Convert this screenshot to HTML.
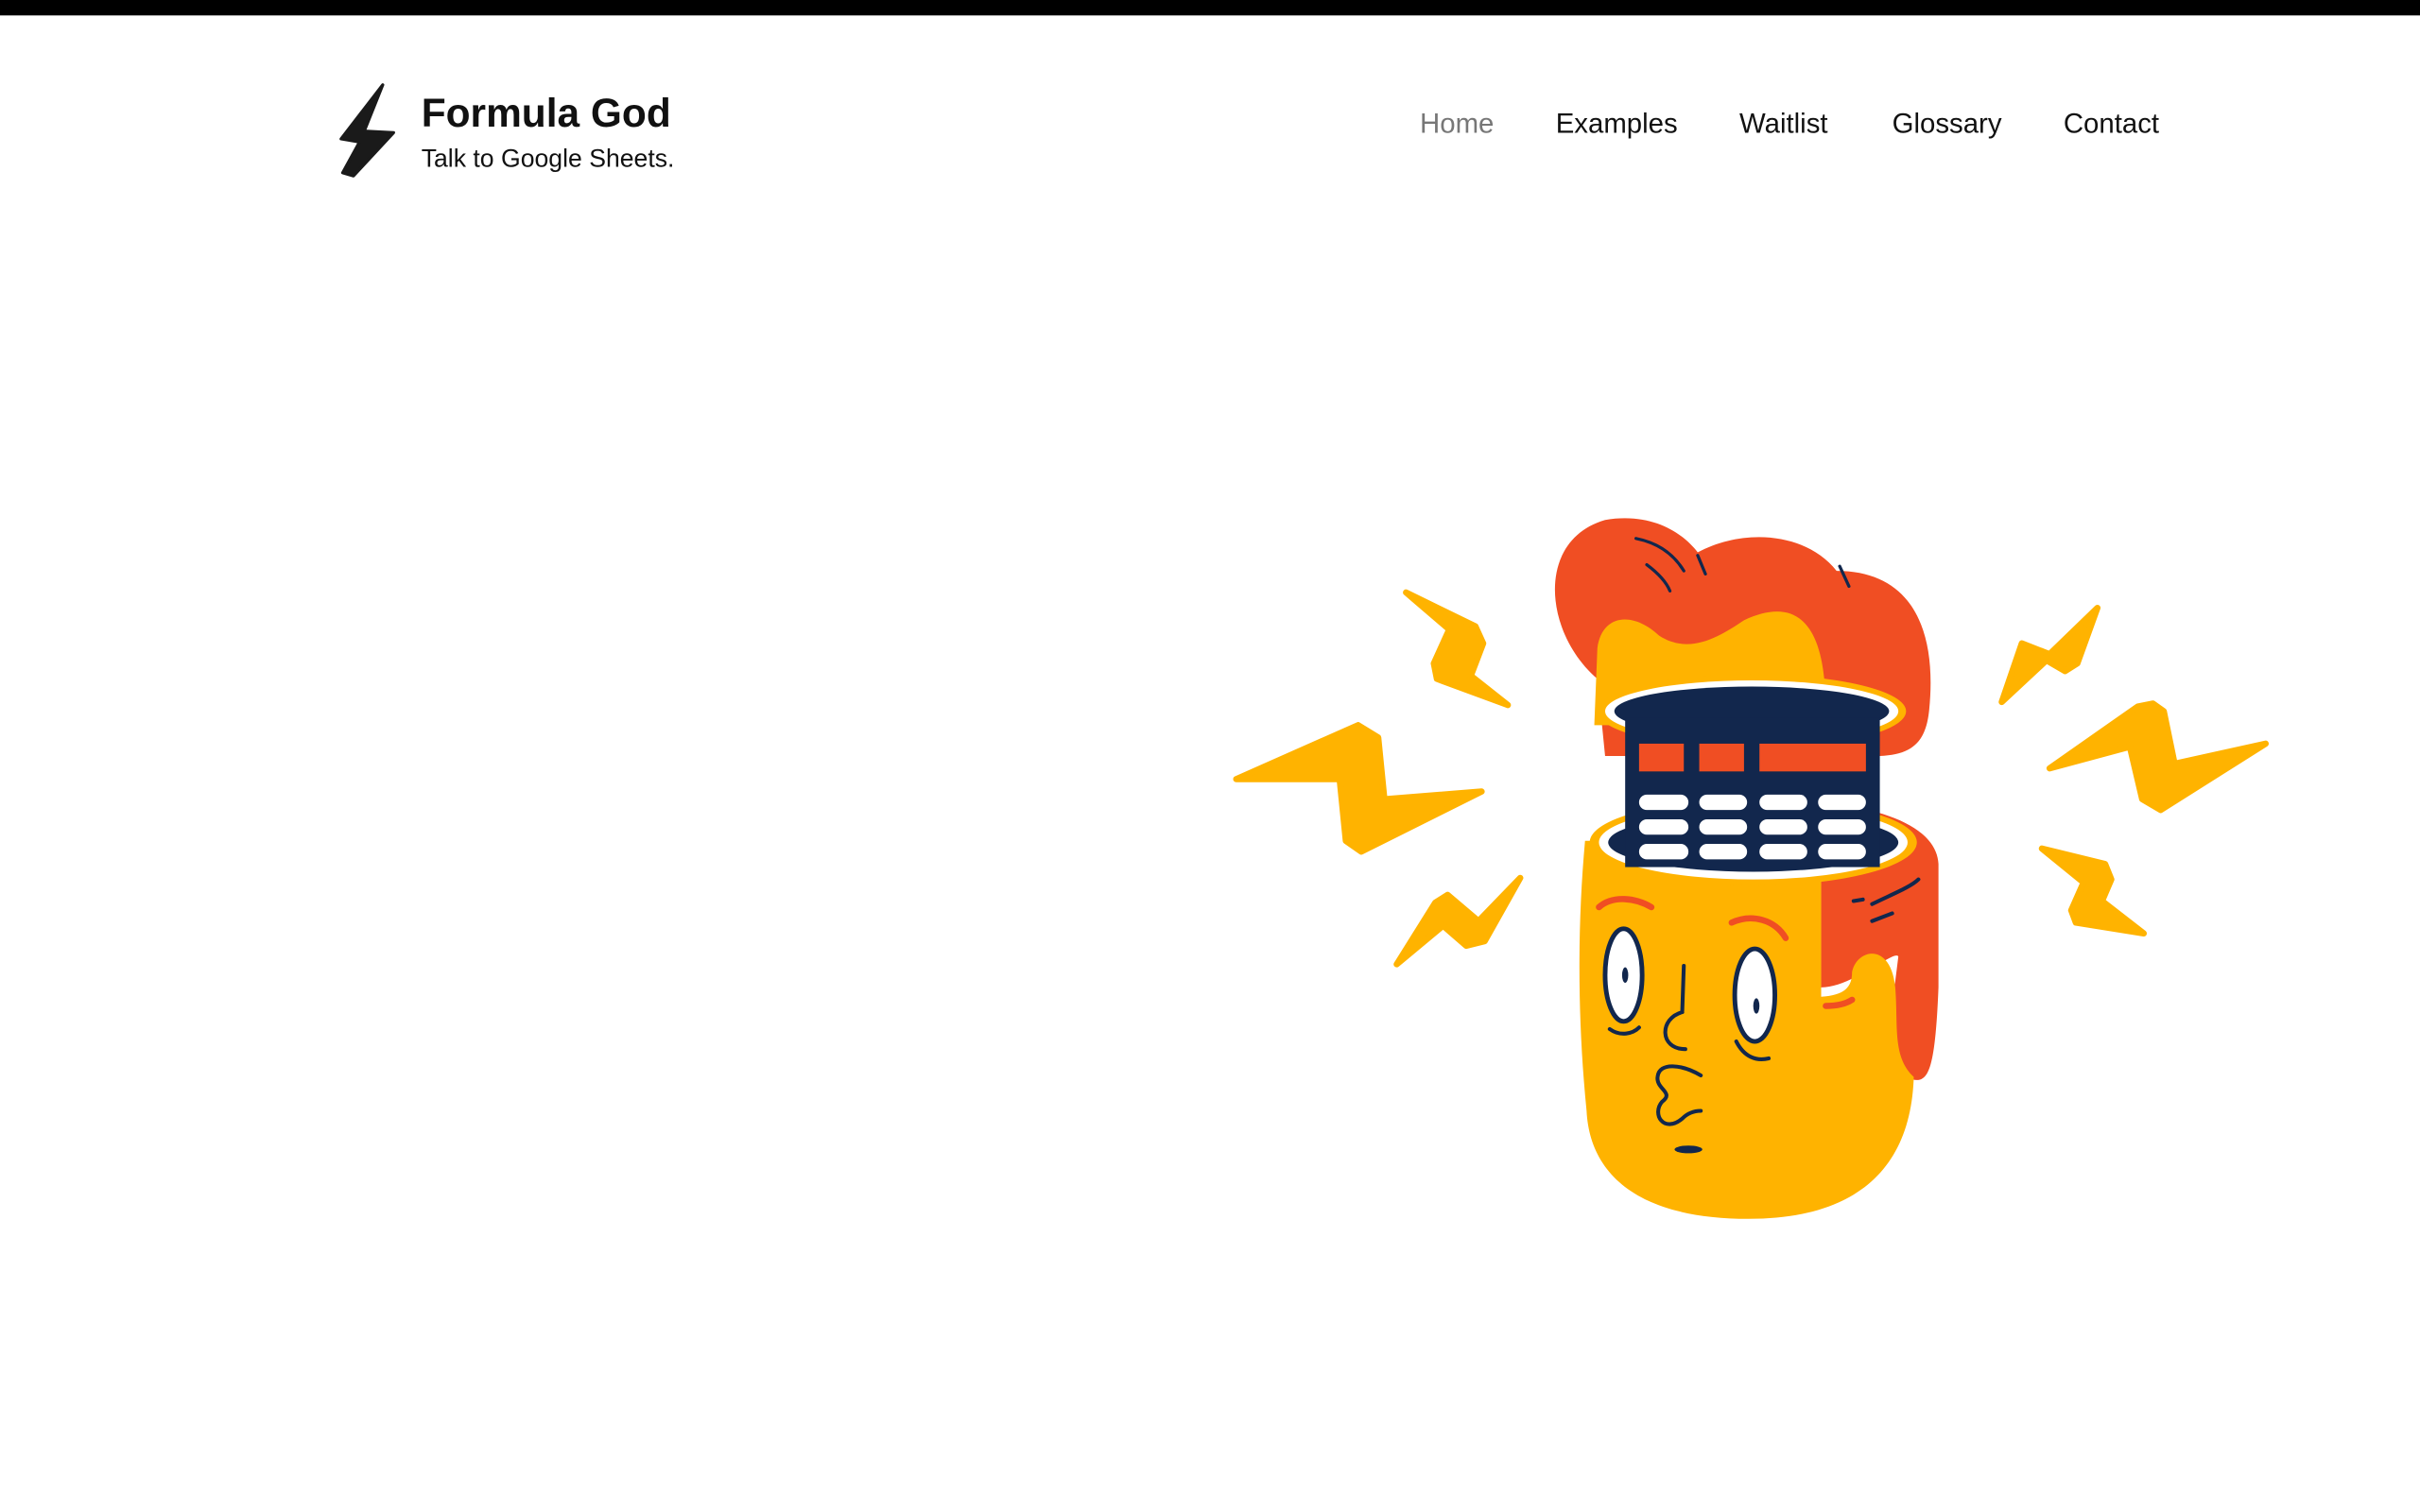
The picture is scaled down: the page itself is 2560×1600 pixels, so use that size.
<!DOCTYPE html>
<html><head><meta charset="utf-8"><style>
html,body{margin:0;padding:0;background:#fff;width:2560px;height:1600px;overflow:hidden}
svg{display:block}
text{font-family:"Liberation Sans",sans-serif}
</style></head><body>
<svg width="2560" height="1600" viewBox="0 0 1568 980" preserveAspectRatio="none">
<rect x="0" y="0" width="1568" height="10" fill="#000"/>
<path d="M248,55 L236,85 L255,86 L229,114 L222,112 L233,92 L221,90 Z" fill="#1a1a1a" stroke="#1a1a1a" stroke-width="2" stroke-linejoin="round"/>
<text x="273" y="82" font-size="26" font-weight="bold" fill="#111">Formula God</text>
<text x="273" y="108" font-size="16.3" fill="#111">Talk to Google Sheets.</text>
<g font-size="18" fill="#111">
<text x="920" y="86" fill="#777">Home</text>
<text x="1008" y="86">Examples</text>
<text x="1127" y="86">Waitlist</text>
<text x="1226" y="86">Glossary</text>
<text x="1337" y="86">Contact</text>
</g>
<g fill="#FFB300" stroke="#FFB300" stroke-width="4" stroke-linejoin="round">
<polygon points="911,384 956,406 961,417 953,438 977,457 931,440 929,430 939,408"/>
<polygon points="801,505 880,470 893,478 897,518 960,513 882,552 872,545 868,505"/>
<polygon points="905,625 930,585 938,580 958,597 985,569 962,610 950,613 935,600"/>
<polygon points="1297,455 1310,417 1328,424 1359,394 1346,430 1338,435 1326,428"/>
<polygon points="1328,498 1385,458 1395,456 1402,461 1409,495 1468,482 1400,525 1388,518 1380,484"/>
<polygon points="1323,550 1364,560 1368,570 1362,584 1389,605 1345,598 1342,590 1350,572"/>
</g>
<path d="M1035,440 C1000,410 995,350 1040,337 C1070,332 1090,345 1100,358 C1130,342 1170,345 1190,370 C1240,370 1255,410 1250,460 C1248,480 1240,490 1215,490 L1040,490 Z" fill="#F04E23"/>
<path d="M1033,470 L1035,420 C1038,398 1058,396 1075,412 C1095,425 1115,412 1130,402 C1160,388 1178,400 1182,440 L1182,470 Z" fill="#FFB300"/>
<g fill="none" stroke="#12274d" stroke-width="2" stroke-linecap="round">
<path d="M1060,349 C1075,352 1085,360 1091,370"/><path d="M1067,366 C1075,372 1080,378 1082,383"/>
<path d="M1100,360 L1105,372"/><path d="M1192,367 L1198,380"/>
</g>
<path d="M1180,520 C1230,525 1255,540 1256,560 L1256,640 C1254,690 1250,700 1242,700 C1228,700 1225,680 1225,660 L1230,620 C1228,615 1200,640 1180,640 Z" fill="#F04E23"/>
<path d="M1027,545 L1180,545 L1180,646 C1195,645 1200,640 1200,630 C1203,615 1225,610 1228,640 C1230,665 1226,685 1240,698 C1238,760 1200,790 1133,790 C1060,790 1030,760 1028,720 C1022,660 1022,600 1027,545 Z" fill="#FFB300"/>
<ellipse cx="1135" cy="461" rx="100" ry="24" fill="#FFB300"/>
<ellipse cx="1135" cy="461" rx="95" ry="20" fill="#fff"/>
<ellipse cx="1135" cy="461" rx="89" ry="16" fill="#12274d"/>
<ellipse cx="1136" cy="546" rx="106" ry="28" fill="#FFB300"/>
<ellipse cx="1136" cy="546" rx="100" ry="24" fill="#fff"/>
<ellipse cx="1136" cy="546" rx="94" ry="19" fill="#12274d"/>
<rect x="1053" y="465" width="165" height="97" fill="#12274d"/>
<g fill="#F04E23"><rect x="1062" y="482" width="29" height="18"/><rect x="1101" y="482" width="29" height="18"/><rect x="1140" y="482" width="69" height="18"/></g>
<g fill="#fff">
<rect x="1062" y="515" width="32" height="10" rx="5"/><rect x="1101" y="515" width="31" height="10" rx="5"/><rect x="1140" y="515" width="31" height="10" rx="5"/><rect x="1178" y="515" width="31" height="10" rx="5"/>
<rect x="1062" y="531" width="32" height="10" rx="5"/><rect x="1101" y="531" width="31" height="10" rx="5"/><rect x="1140" y="531" width="31" height="10" rx="5"/><rect x="1178" y="531" width="31" height="10" rx="5"/>
<rect x="1062" y="547" width="32" height="10" rx="5"/><rect x="1101" y="547" width="31" height="10" rx="5"/><rect x="1140" y="547" width="31" height="10" rx="5"/><rect x="1178" y="547" width="31" height="10" rx="5"/>
</g>
<g fill="none" stroke="#F04E23" stroke-width="4" stroke-linecap="round">
<path d="M1036,588 C1045,580 1060,582 1070,588"/><path d="M1122,598 C1135,592 1150,596 1157,608"/>
<path d="M1183,652 C1192,652 1197,650 1200,648"/>
</g>
<ellipse cx="1052" cy="632" rx="12" ry="30" fill="#fff" stroke="#12274d" stroke-width="3"/>
<ellipse cx="1137" cy="645" rx="13" ry="30" fill="#fff" stroke="#12274d" stroke-width="3"/>
<g fill="#12274d"><ellipse cx="1053" cy="632" rx="2" ry="5"/><ellipse cx="1138" cy="652" rx="2" ry="5"/><ellipse cx="1094" cy="745" rx="9" ry="2.5"/></g>
<g fill="none" stroke="#12274d" stroke-width="2.5" stroke-linecap="round">
<path d="M1091,626 L1090,655"/><path d="M1090,656 C1075,660 1075,680 1092,680"/>
<path d="M1043,667 C1050,672 1058,670 1062,666"/><path d="M1125,675 C1130,685 1138,688 1146,686"/>
<path d="M1102,697 C1090,690 1075,688 1074,698 C1073,706 1085,708 1077,714 C1070,722 1078,735 1090,725 C1095,720 1100,720 1102,720"/>
<path d="M1201,584 L1207,583"/><path d="M1213,586 C1225,580 1238,575 1243,570"/><path d="M1213,597 L1226,592"/>
</g>
</svg>
</body></html>
